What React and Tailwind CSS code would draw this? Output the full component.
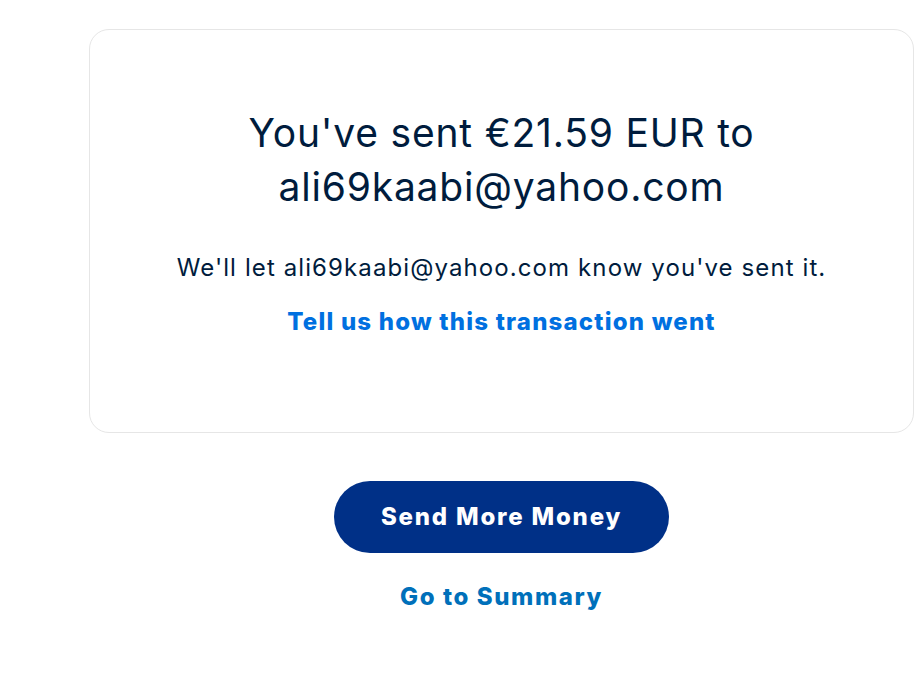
export default function App() {
  return (
    <div className="min-h-screen bg-white pt-[29px] font-['Inter',sans-serif]">
      <div className="ml-[89px] w-[825px]">
        {/* Confirmation card */}
        <div className="flex h-[404px] flex-col items-center rounded-[20px] border border-[#e6e6e6] px-6 pt-[76px] text-center">
          <h1 className="text-[39px] leading-[54px] font-normal tracking-[0.8px] text-[#001c3d]">
            You've sent €21.59 EUR to
            <br />
            ali69kaabi@yahoo.com
          </h1>
          <p className="mt-[39px] text-[24px] leading-[30px] tracking-[1.1px] whitespace-nowrap text-[#001c3d]">
            We'll let ali69kaabi@yahoo.com know you've sent it.
          </p>
          <a href="#" className="mt-[24px] text-[24px] leading-[30px] font-extrabold tracking-[1.2px] text-[#0070e0]">
            Tell us how this transaction went
          </a>
        </div>

        {/* Actions */}
        <div className="mt-[48px] flex flex-col items-center">
          <button className="h-[72px] w-[335px] rounded-full bg-[#003087] text-[24px] font-extrabold tracking-[1.8px] text-white">
            Send More Money
          </button>
          <a href="#" className="mt-[28px] text-[24px] leading-[32px] font-extrabold tracking-[1.6px] text-[#0070ba]">
            Go to Summary
          </a>
        </div>
      </div>
    </div>
  );
}
